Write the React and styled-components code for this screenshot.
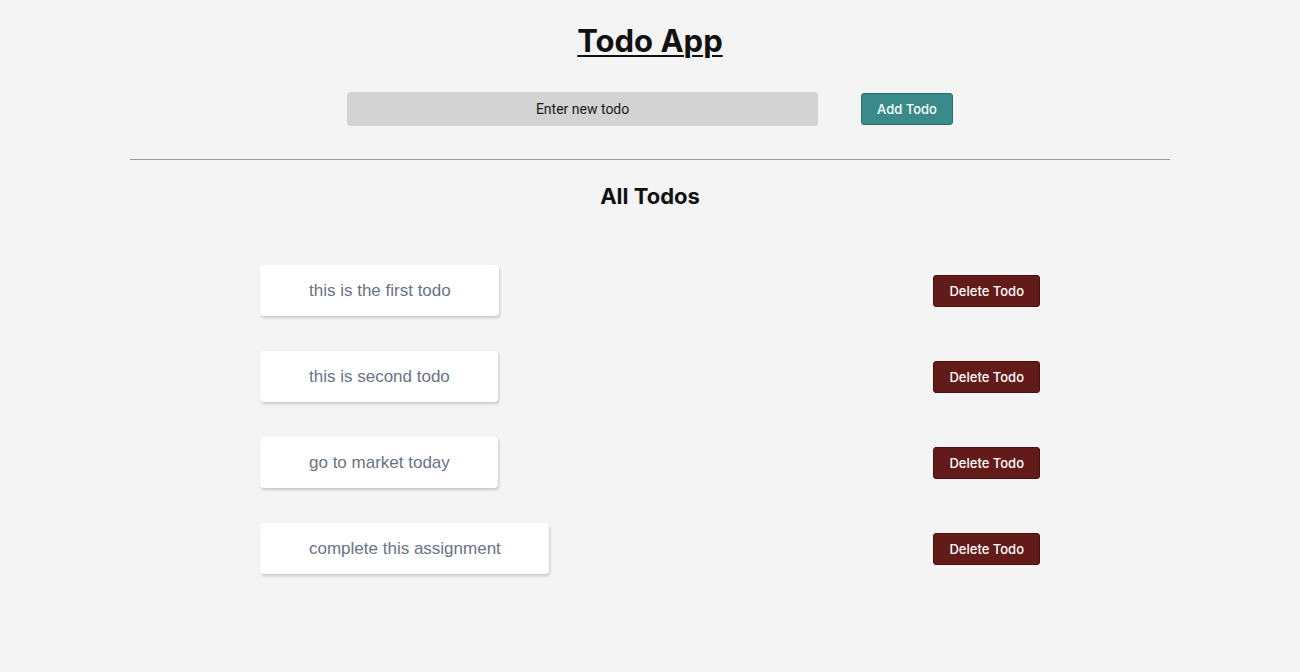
import React, { useState } from "react";
import styled, { createGlobalStyle } from "styled-components";

const GlobalStyle = createGlobalStyle`
  body {
    margin: 0;
    background-color: #f4f4f4;
    font-family: Inter, "Liberation Sans", sans-serif;
  }
`;

const initialTodos = [
  "this is the first todo",
  "this is second todo",
  "go to market today",
  "complete this assignment",
];

function App() {
  const [todo, setTodo] = useState("");
  const [todos, setTodos] = useState(initialTodos);

  const addTodo = () => {
    if (!todo.trim()) return;
    setTodos((todos) => todos.concat(todo));
    setTodo("");
  };

  const deleteTodo = (index) => {
    setTodos((todos) => todos.filter((_, i) => i !== index));
  };

  return (
    <Page>
      <GlobalStyle />
      <Title>Todo App</Title>
      <InputRow>
        <TodoInput
          value={todo}
          onChange={(e) => setTodo(e.target.value)}
          placeholder="Enter new todo"
        />
        <Button color="#3a8a89" border="#2a6e6d" onClick={addTodo}>
          Add Todo
        </Button>
      </InputRow>
      <Divider />
      <SubTitle>All Todos</SubTitle>
      <TodoList>
        {todos.map((item, index) => (
          <TodoRow key={index}>
            <TodoCard>{item}</TodoCard>
            <Button
              color="#631b19"
              border="#4a100e"
              onClick={() => deleteTodo(index)}
            >
              Delete Todo
            </Button>
          </TodoRow>
        ))}
      </TodoList>
    </Page>
  );
}

export default App;

const Page = styled.div`
  min-height: 100vh;
  display: flex;
  flex-direction: column;
  align-items: center;
  padding-top: 21px;
  box-sizing: border-box;
`;

const Title = styled.h1`
  margin: 0;
  font-size: 31px;
  font-weight: 700;
  color: #111;
  text-decoration: underline;
  text-decoration-thickness: 2px;
  text-underline-offset: 3px;
  line-height: 40px;
`;

const InputRow = styled.div`
  display: flex;
  align-items: center;
  gap: 43px;
  margin-top: 31px;
`;

const TodoInput = styled.input`
  width: 471px;
  height: 34px;
  box-sizing: border-box;
  border: none;
  outline: none;
  border-radius: 4px;
  background-color: #d3d3d3;
  text-align: center;
  font-family: Roboto, sans-serif;
  font-size: 14px;
  color: #111;

  &::placeholder {
    color: #1a1a1a;
  }
`;

const Button = styled.button`
  height: 32px;
  padding: 0 15px;
  border: 1px solid ${(props) => props.border};
  border-radius: 3px;
  background-color: ${(props) => props.color};
  color: #fff;
  font-family: Inter, sans-serif;
  font-size: 13px;
  font-weight: 500;
  cursor: pointer;
`;

const Divider = styled.hr`
  width: 80%;
  margin: 33px 0 0;
  border: none;
  border-top: 1px solid #999;
`;

const SubTitle = styled.h2`
  margin: 21px 0 0;
  font-size: 22px;
  font-weight: 700;
  color: #111;
  line-height: 30px;
`;

const TodoList = styled.div`
  width: 60%;
  display: flex;
  flex-direction: column;
  gap: 35px;
  margin-top: 54px;
`;

const TodoRow = styled.div`
  display: flex;
  align-items: center;
  justify-content: space-between;
`;

const TodoCard = styled.div`
  height: 51px;
  display: flex;
  align-items: center;
  padding: 0 48px 0 49px;
  box-sizing: border-box;
  background-color: #fff;
  border-radius: 4px;
  box-shadow: 1px 2px 3px rgba(0, 0, 0, 0.18);
  font-family: "Liberation Sans", Arial, sans-serif;
  font-size: 17px;
  color: #687386;
`;
